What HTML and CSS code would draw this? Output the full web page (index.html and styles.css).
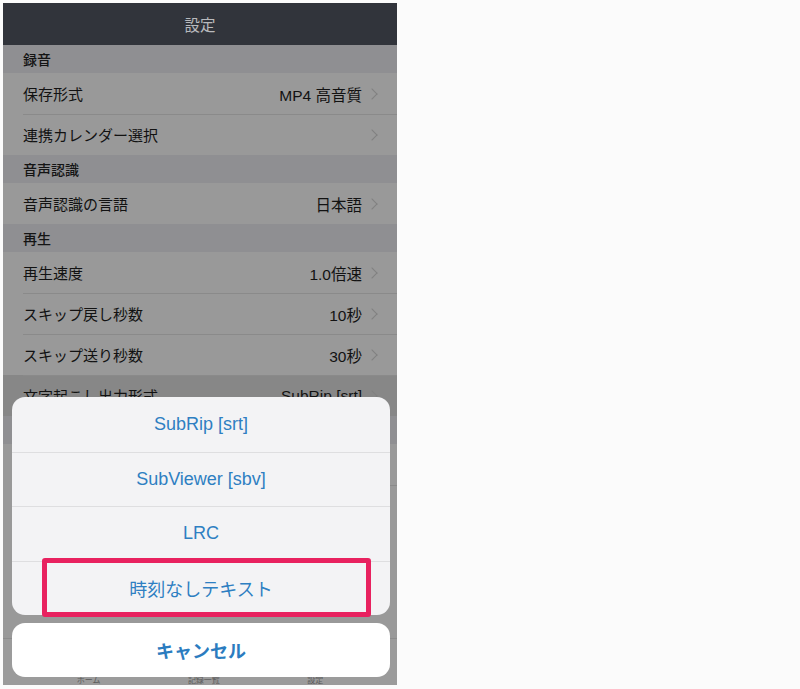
FILE: index.html
```html
<!DOCTYPE html>
<html lang="ja">
<head>
<meta charset="utf-8">
<title>設定</title>
<link rel="stylesheet" href="styles.css">
</head>
<body>
<div class="page">
  <div class="phone">
    <div class="navbar">設定</div>
    <div class="list">
      <div class="section-header">録音</div>
      <div class="row"><span class="label">保存形式</span><span class="value">MP4 高音質</span><span class="chev"></span></div>
      <div class="row"><span class="label">連携カレンダー選択</span><span class="value"></span><span class="chev"></span></div>
      <div class="section-header">音声認識</div>
      <div class="row"><span class="label">音声認識の言語</span><span class="value">日本語</span><span class="chev"></span></div>
      <div class="section-header">再生</div>
      <div class="row"><span class="label">再生速度</span><span class="value">1.0倍速</span><span class="chev"></span></div>
      <div class="row"><span class="label">スキップ戻し秒数</span><span class="value">10秒</span><span class="chev"></span></div>
      <div class="row"><span class="label">スキップ送り秒数</span><span class="value">30秒</span><span class="chev"></span></div>
      <div class="row selected"><span class="label">文字起こし出力形式</span><span class="value">SubRip [srt]</span><span class="chev"></span></div>
      <div class="section-header">その他</div>
      <div class="row"><span class="label">ヘルプ</span><span class="value"></span><span class="chev"></span></div>
      <div class="row"><span class="label">お問い合わせ</span><span class="value"></span><span class="chev"></span></div>
    </div>
    <div class="tabbar">
      <span class="tab">ホーム</span>
      <span class="tab">記録一覧</span>
      <span class="tab">設定</span>
    </div>

    <div class="sheet">
      <div class="sheet-group">
        <div class="sheet-item">SubRip [srt]</div>
        <div class="sheet-item">SubViewer [sbv]</div>
        <div class="sheet-item">LRC</div>
        <div class="sheet-item">時刻なしテキスト</div>
      </div>
      <div class="sheet-cancel">キャンセル</div>
    </div>
    <div class="highlight"></div>
  </div>
</div>
</body>
</html>
```

FILE: styles.css
```css
html, body {
  margin: 0;
  padding: 0;
  background: #fbfbfb;
}
body {
  font-family: "Liberation Sans", "Noto Sans CJK JP", sans-serif;
}
.page {
  padding: 3px;
  width: 800px;
  height: 689px;
  box-sizing: border-box;
}
.phone {
  position: relative;
  width: 394px;
  height: 682px;
  overflow: hidden;
  background: #999999;
  display: flex;
  flex-direction: column;
}
.navbar {
  height: 42px;
  flex: none;
  background: #31343b;
  color: #b9babd;
  font-size: 15.5px;
  display: flex;
  align-items: center;
  justify-content: center;
}
.list {
  flex: 1;
  display: flex;
  flex-direction: column;
  overflow: hidden;
}
.section-header {
  height: 28px;
  flex: none;
  background: #8f8f92;
  color: #141414;
  font-size: 14px;
  font-weight: 500;
  padding-left: 20px;
  display: flex;
  align-items: center;
}
.row {
  height: 41px;
  flex: none;
  background: #999999;
  padding-left: 20px;
  padding-right: 20px;
  display: flex;
  align-items: center;
  font-size: 15px;
  color: #121212;
  position: relative;
}
.row + .row::before {
  content: "";
  position: absolute;
  left: 20px;
  right: 0;
  top: 0;
  height: 1px;
  background: #8a8a8a;
}
.row.selected {
  background: #878787;
}
.label {
  flex: 1;
}
.value {
  font-size: 15.5px;
  margin-right: 6px;
}
.chev {
  width: 7px;
  height: 7px;
  border-right: 1.5px solid #808080;
  border-top: 1.5px solid #808080;
  transform: rotate(45deg);
  margin-right: 1px;
}
.tabbar {
  height: 47px;
  flex: none;
  background: #9b9b9b;
  border-top: 1px solid #8c8c8c;
  display: flex;
  justify-content: space-around;
  align-items: flex-end;
  font-size: 8px;
  line-height: 9px;
  color: #5a5a5a;
  padding: 0 30px;
  box-sizing: border-box;
}
.tab {
  margin-bottom: 0;
}
.sheet {
  position: absolute;
  left: 9px;
  right: 7px;
  top: 394px;
  display: flex;
  flex-direction: column;
  gap: 8px;
}
.sheet-group {
  background: #f3f3f5;
  border-radius: 13px;
  overflow: hidden;
  display: flex;
  flex-direction: column;
}
.sheet-item {
  height: 54.5px;
  display: flex;
  align-items: center;
  justify-content: center;
  font-size: 18px;
  color: #2e7fc2;
  border-top: 1px solid #dedee0;
  box-sizing: border-box;
}
.sheet-item:first-child {
  border-top: none;
}
.sheet-cancel {
  height: 54px;
  background: #ffffff;
  border-radius: 13px;
  display: flex;
  align-items: center;
  justify-content: center;
  font-size: 18px;
  font-weight: bold;
  color: #2b7cc0;
}
.highlight {
  position: absolute;
  left: 39px;
  top: 555px;
  width: 329px;
  height: 59px;
  box-sizing: border-box;
  border: 5px solid #e8215f;
  border-radius: 3px;
}
```
